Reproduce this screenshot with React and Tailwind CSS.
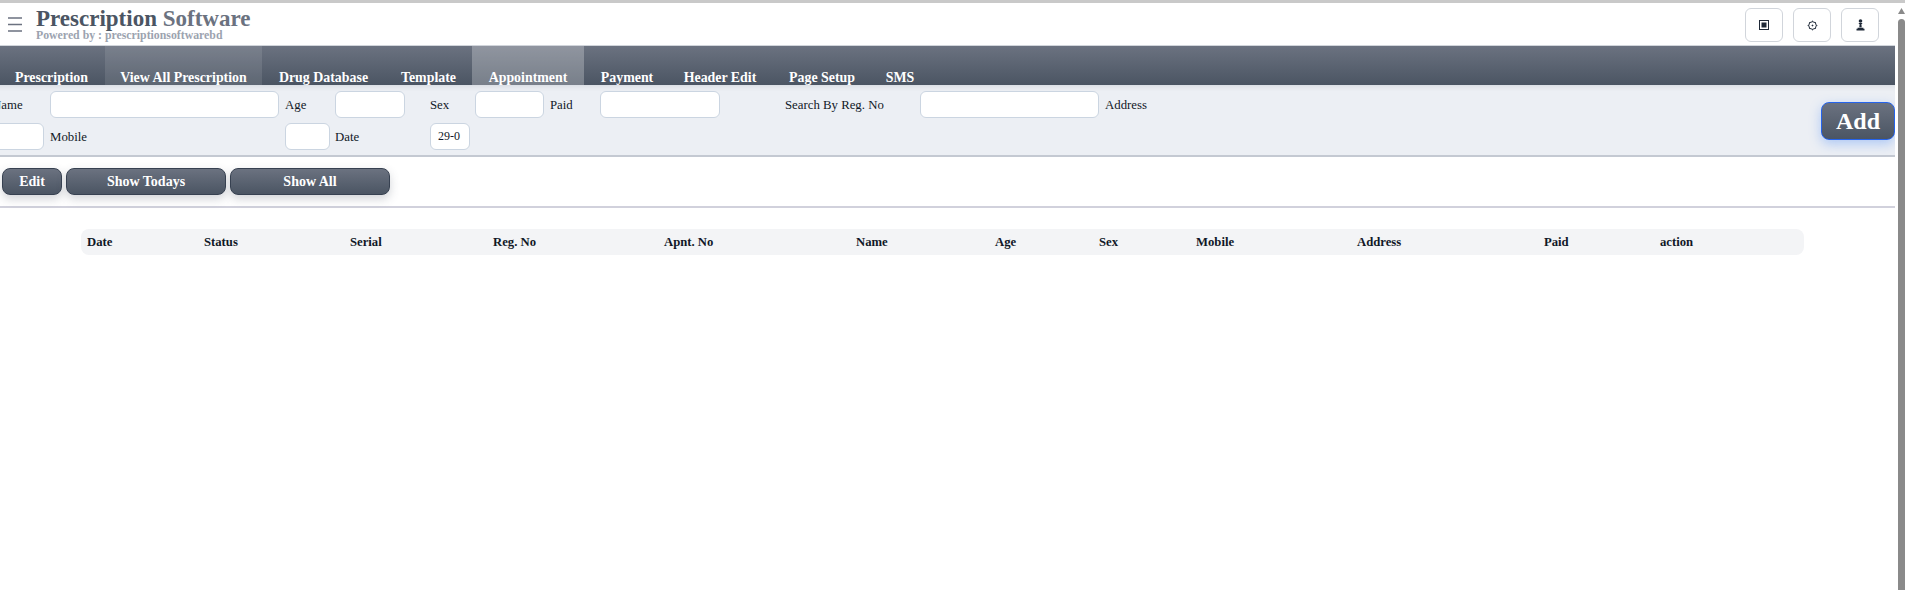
const serif = "font-['Liberation_Serif',serif]";

const tabs = [
  { label: "Prescription", width: "w-[107px]" },
  { label: "View All Prescription", width: "w-[157px]", active: "bg-white/10" },
  { label: "Drug Database", width: "w-[123px]" },
  { label: "Template", width: "w-[87px]" },
  { label: "Appointment", width: "w-[112px]", active: "bg-white/25" },
  { label: "Payment", width: "w-[86px]" },
  { label: "Header Edit", width: "w-[100px]" },
  { label: "Page Setup", width: "w-[104px]" },
  { label: "SMS", width: "w-[52px]" },
];

const columns = [
  "Date",
  "Status",
  "Serial",
  "Reg. No",
  "Apnt. No",
  "Name",
  "Age",
  "Sex",
  "Mobile",
  "Address",
  "Paid",
  "action",
];

const Field = ({ className = "w-full", value }) => (
  <input
    readOnly
    value={value ?? ""}
    className={`h-[27px] rounded-md border border-[#cbd5e1] bg-white px-2 text-[12px] text-[#111827] outline-none ${className}`}
  />
);

const Label = ({ children, className = "" }) => (
  <label className={`pt-[2px] ${className}`}>{children}</label>
);

const ActionButton = ({ children, width }) => (
  <button
    className={`h-[27px] ${width} rounded-lg border border-[#374151] bg-gradient-to-b from-[#6b7280] to-[#4b5563] text-[14px] font-bold text-white shadow-[0_4px_10px_rgba(75,85,99,0.25)]`}
  >
    {children}
  </button>
);

const IconButton = ({ children }) => (
  <button className="flex h-[34px] w-[38px] items-center justify-center rounded-md border border-[#d1d5db] bg-white text-[#1f2937]">
    {children}
  </button>
);

export default function App() {
  return (
    <div className={`flex h-[590px] w-full flex-col overflow-hidden bg-white ${serif}`}>
      <div className="h-[3px] shrink-0 bg-[#c9c9c9]" />

      <div className="flex min-h-0 flex-1">
        <main className="w-[1895px] shrink-0 overflow-hidden">
          <header className="flex h-[43px] items-center border-b border-[#d1d5db] pr-4">
            <svg className="ml-[8px] text-[#6b7280]" width="14" height="15" viewBox="0 0 14 15" stroke="currentColor" strokeWidth="1.3">
              <path d="M0 1h14M0 7.5h14M0 14h14" />
            </svg>
            <div className="mt-[1px] ml-[14px] flex flex-col">
              <h1 className="text-[23px] leading-[21px] font-bold text-[#4b5563]">
                Prescription <span className="text-[#6b7280]">Software</span>
              </h1>
              <p className="text-[11.8px] leading-[12px] font-bold text-[#9ca3af]">
                Powered by : prescriptionsoftwarebd
              </p>
            </div>
            <div className="mt-[2px] ml-auto flex gap-[10px]">
              <IconButton>
                <svg width="10" height="10" viewBox="0 0 10 10">
                  <rect x="0.5" y="0.5" width="9" height="9" fill="none" stroke="currentColor" />
                  <rect x="2.5" y="2.5" width="5" height="5" fill="currentColor" />
                </svg>
              </IconButton>
              <IconButton>
                <svg width="11" height="11" viewBox="0 0 11 11" fill="none" stroke="currentColor">
                  <circle cx="5.5" cy="5.5" r="3.8" />
                  <path d="M5.5 0.6v1.2M5.5 9.2v1.2M0.6 5.5h1.2M9.2 5.5h1.2M2 2l.8.8M8.2 8.2l.8.8M9 2l-.8.8M2.8 8.2l-.8.8" strokeWidth="0.8" />
                  <circle cx="5.5" cy="5.5" r="0.5" fill="currentColor" />
                </svg>
              </IconButton>
              <IconButton>
                <svg width="9" height="12" viewBox="0 0 9 12" fill="currentColor">
                  <circle cx="4.5" cy="2" r="1.8" />
                  <path d="M2.8 3.9h3.4v1H5.4l.3 3.4H3.3l.3-3.4H2.8zM1.6 8.8h5.8v1H8.5v1.7H.5V9.8h1.1z" />
                </svg>
              </IconButton>
            </div>
          </header>

          <nav className="-ml-[2px] flex h-[39px] items-stretch bg-gradient-to-b from-[#6b7280] to-[#4b5563]">
            {tabs.map((tab) => (
              <a
                key={tab.label}
                className={`${tab.width} ${tab.active ?? ""} flex items-end justify-center text-[13.9px] leading-[15px] font-bold whitespace-nowrap text-white`}
              >
                {tab.label}
              </a>
            ))}
          </nav>

          <section className="-ml-[25px] h-[72px] border-b-2 border-[#c4c9d2] bg-[#eceff4] pt-[6px] shadow-[inset_0_6px_6px_-6px_rgba(75,85,99,0.2)]">
            <div className="relative">
              <div className="grid grid-cols-[70px_229px_44px_89px_39px_69px_44px_179px_129px_179px_70px] -ml-px items-center gap-x-[6px] gap-y-[5px] text-[12.8px] text-[#111827]">
                <Label className="pl-[18px]">Name</Label>
                <Field />
                <Label>Age</Label>
                <Field className="w-[70px]" />
                <Label>Sex</Label>
                <Field />
                <Label>Paid</Label>
                <Field className="w-[120px]" />
                <Label>Search By Reg. No</Label>
                <Field />
                <Label>Address</Label>

                <Field />
                <Label>Mobile</Label>
                <Field className="w-[45px]" />
                <Label>Date</Label>
                <Field className="w-[40px] px-[7px]" value="29-0" />
              </div>
              <button className="absolute top-[11px] right-0 h-[38px] w-[74px] rounded-lg border border-[#2563eb] bg-gradient-to-b from-[#6b7280] to-[#4b5563] text-[24px] font-bold text-white shadow-[0_4px_12px_rgba(59,130,246,0.35)]">
                Add
              </button>
            </div>
          </section>

          <div className="flex h-[51px] items-center gap-[4px] border-b-2 border-[#d1d1dc] pl-[2px]">
            <ActionButton width="w-[60px]">Edit</ActionButton>
            <ActionButton width="w-[160px]">Show Todays</ActionButton>
            <ActionButton width="w-[160px]">Show All</ActionButton>
          </div>

          <div className="mt-[21px] ml-[81px] grid h-[26px] w-[1723px] grid-cols-[117px_146px_143px_171px_192px_139px_104px_97px_161px_187px_116px_1fr] items-center rounded-lg bg-[#f3f4f6] pt-[2px] pl-[6px] text-[12.7px] font-bold text-[#111827]">
            {columns.map((column) => (
              <span key={column}>{column}</span>
            ))}
          </div>
        </main>

        <aside className="ml-[3px] flex w-[7px] flex-col items-center pt-[5px]">
          <svg width="7" height="6" viewBox="0 0 7 6" className="text-[#8a8a8a]" fill="currentColor">
            <path d="M3.5 0L7 6H0z" />
          </svg>
          <div className="mt-[5px] w-[7px] flex-1 rounded-t-full bg-[#8a8a8a]" />
        </aside>
      </div>
    </div>
  );
}
